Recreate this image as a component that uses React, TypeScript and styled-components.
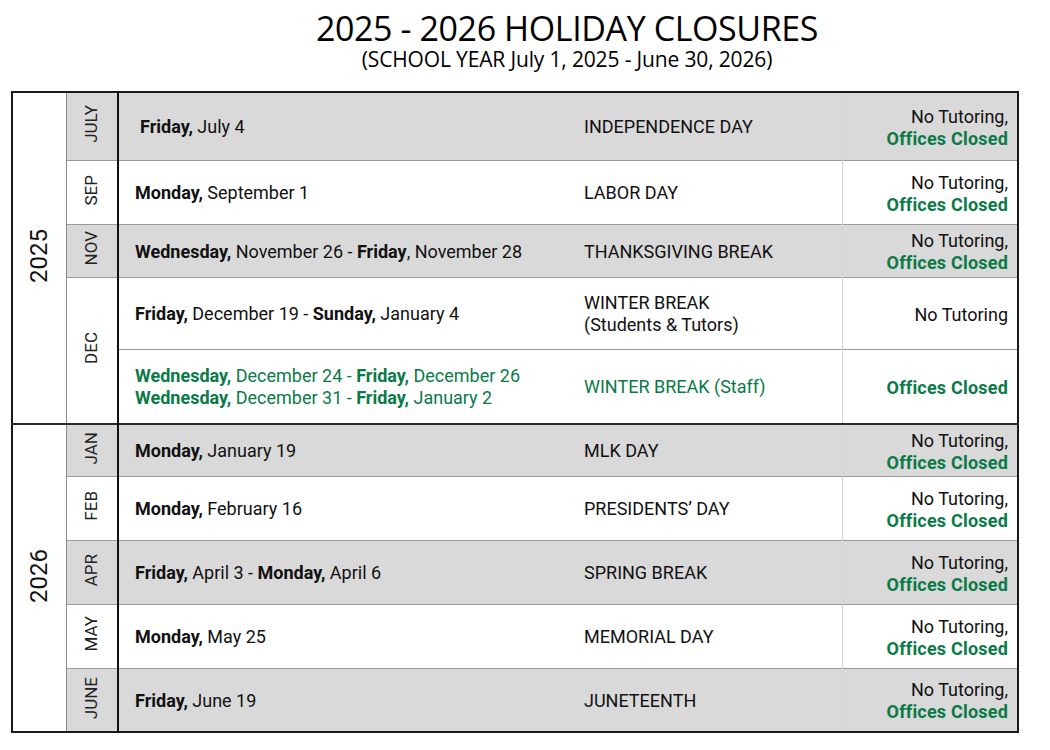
import React from "react";
import styled, { createGlobalStyle } from "styled-components";

const GREEN = "#0a7a48";
const GRAY = "#d9d9d9";

const Global = createGlobalStyle`
  html, body { margin: 0; padding: 0; background: #fff; }
  body { font-family: Roboto, "Liberation Sans", sans-serif; color: #111; }
`;

const Page = styled.div`
  width: 1050px;
  height: 750px;
  background: #fff;
  overflow: hidden;
`;

const Header = styled.header`
  padding: 10px 0 0 84px;
  text-align: center;
  font-family: "Open Sans", "Liberation Sans", sans-serif;
  color: #000;
`;

const Title = styled.h1`
  margin: 0;
  font-weight: 400;
  font-size: 34px;
  line-height: 37px;
  letter-spacing: -0.4px;
`;

const Subtitle = styled.div`
  margin: 0;
  font-size: 21px;
  line-height: 24px;
  letter-spacing: -0.15px;
`;

const Table = styled.table`
  margin: 20px 0 0 11px;
  width: 1006px;
  table-layout: fixed;
  border-collapse: collapse;
  border: 2px solid #1a1a1a;
  font-size: 18px;
`;

const Row = styled.tr<{ $gray?: boolean; $h: number; $yearTop?: boolean }>`
  height: ${(p) => p.$h}px;
  background: ${(p) => (p.$gray ? GRAY : "#fff")};
  & > td {
    border-top: ${(p) => (p.$yearTop ? "2px solid #2a2a2a" : "1px solid #9a9a9a")};
  }
`;

const YearCell = styled.td`
  background: #fff;
  border-right: 1px solid #8a8a8a;
  text-align: center;
  vertical-align: middle;
  padding: 0;
`;

const YearLabel = styled.span`
  display: inline-block;
  writing-mode: vertical-rl;
  transform: rotate(180deg);
  font-size: 24px;
  line-height: 24px;
  color: #111;
`;

const MonthCell = styled.td<{ $gray?: boolean }>`
  background: ${(p) => (p.$gray ? GRAY : "#fff")};
  border-right: 2px solid #111;
  text-align: center;
  vertical-align: middle;
  padding: 0;
`;

const MonthLabel = styled.span`
  display: inline-block;
  writing-mode: vertical-rl;
  transform: rotate(180deg);
  font-size: 17px;
  line-height: 17px;
  color: #222;
`;

const DateCell = styled.td<{ $green?: boolean; $indent?: number }>`
  padding: 2px 0 0 ${(p) => 16 + (p.$indent ?? 0)}px;
  line-height: 22px;
  color: ${(p) => (p.$green ? GREEN : "#111")};
  white-space: nowrap;
  b { font-weight: 700; }
`;

const HolidayCell = styled.td<{ $green?: boolean }>`
  padding: 2px 0 0 17px;
  line-height: 22px;
  color: ${(p) => (p.$green ? GREEN : "#111")};
  border-right: 1px solid #d4d4d4;
  white-space: nowrap;
`;

const StatusCell = styled.td`
  padding: 3px 9px 0 0;
  text-align: right;
  line-height: 22px;
  color: #111;
  white-space: nowrap;
`;

const Closed = styled.span`
  display: block;
  color: ${GREEN};
  font-weight: 700;
  letter-spacing: 0.2px;
`;

const Line = styled.span`
  display: block;
`;

type Status = "both" | "tutoring" | "closed";

const StatusContent = ({ s }: { s: Status }) => (
  <>
    {s !== "closed" && <Line>{s === "both" ? "No Tutoring," : "No Tutoring"}</Line>}
    {s !== "tutoring" && <Closed>Offices Closed</Closed>}
  </>
);

export default function App() {
  return (
    <Page>
      <Global />
      <Header>
        <Title>2025 - 2026 HOLIDAY CLOSURES</Title>
        <Subtitle>(SCHOOL YEAR July 1, 2025 - June 30, 2026)</Subtitle>
      </Header>
      <Table>
        <colgroup>
          <col style={{ width: 54 }} />
          <col style={{ width: 52 }} />
          <col style={{ width: 449 }} />
          <col style={{ width: 275 }} />
          <col style={{ width: 176 }} />
        </colgroup>
        <tbody>
          <Row $gray $h={68}>
            <YearCell rowSpan={5}>
              <YearLabel>2025</YearLabel>
            </YearCell>
            <MonthCell $gray>
              <MonthLabel>JULY</MonthLabel>
            </MonthCell>
            <DateCell $indent={5}>
              <b>Friday,</b> July 4
            </DateCell>
            <HolidayCell>INDEPENDENCE DAY</HolidayCell>
            <StatusCell>
              <StatusContent s="both" />
            </StatusCell>
          </Row>
          <Row $h={64}>
            <MonthCell>
              <MonthLabel>SEP</MonthLabel>
            </MonthCell>
            <DateCell>
              <b>Monday,</b> September 1
            </DateCell>
            <HolidayCell>LABOR DAY</HolidayCell>
            <StatusCell>
              <StatusContent s="both" />
            </StatusCell>
          </Row>
          <Row $gray $h={53}>
            <MonthCell $gray>
              <MonthLabel>NOV</MonthLabel>
            </MonthCell>
            <DateCell>
              <b>Wednesday,</b> November 26 - <b>Friday</b>, November 28
            </DateCell>
            <HolidayCell>THANKSGIVING BREAK</HolidayCell>
            <StatusCell>
              <StatusContent s="both" />
            </StatusCell>
          </Row>
          <Row $h={72}>
            <MonthCell rowSpan={2}>
              <MonthLabel>DEC</MonthLabel>
            </MonthCell>
            <DateCell>
              <b>Friday,</b> December 19 - <b>Sunday,</b> January 4
            </DateCell>
            <HolidayCell>
              <Line>WINTER BREAK</Line>
              <Line>(Students &amp; Tutors)</Line>
            </HolidayCell>
            <StatusCell>
              <StatusContent s="tutoring" />
            </StatusCell>
          </Row>
          <Row $h={75}>
            <DateCell $green>
              <Line>
                <b>Wednesday,</b> December 24 - <b>Friday,</b> December 26
              </Line>
              <Line>
                <b>Wednesday,</b> December 31 - <b>Friday,</b> January 2
              </Line>
            </DateCell>
            <HolidayCell $green>WINTER BREAK (Staff)</HolidayCell>
            <StatusCell>
              <StatusContent s="closed" />
            </StatusCell>
          </Row>
          <Row $gray $h={52} $yearTop>
            <YearCell rowSpan={5}>
              <YearLabel>2026</YearLabel>
            </YearCell>
            <MonthCell $gray>
              <MonthLabel>JAN</MonthLabel>
            </MonthCell>
            <DateCell>
              <b>Monday,</b> January 19
            </DateCell>
            <HolidayCell>MLK DAY</HolidayCell>
            <StatusCell>
              <StatusContent s="both" />
            </StatusCell>
          </Row>
          <Row $h={64}>
            <MonthCell>
              <MonthLabel>FEB</MonthLabel>
            </MonthCell>
            <DateCell>
              <b>Monday,</b> February 16
            </DateCell>
            <HolidayCell>PRESIDENTS’ DAY</HolidayCell>
            <StatusCell>
              <StatusContent s="both" />
            </StatusCell>
          </Row>
          <Row $gray $h={64}>
            <MonthCell $gray>
              <MonthLabel>APR</MonthLabel>
            </MonthCell>
            <DateCell>
              <b>Friday,</b> April 3 - <b>Monday,</b> April 6
            </DateCell>
            <HolidayCell>SPRING BREAK</HolidayCell>
            <StatusCell>
              <StatusContent s="both" />
            </StatusCell>
          </Row>
          <Row $h={64}>
            <MonthCell>
              <MonthLabel>MAY</MonthLabel>
            </MonthCell>
            <DateCell>
              <b>Monday,</b> May 25
            </DateCell>
            <HolidayCell>MEMORIAL DAY</HolidayCell>
            <StatusCell>
              <StatusContent s="both" />
            </StatusCell>
          </Row>
          <Row $gray $h={64}>
            <MonthCell $gray>
              <MonthLabel>JUNE</MonthLabel>
            </MonthCell>
            <DateCell>
              <b>Friday,</b> June 19
            </DateCell>
            <HolidayCell>JUNETEENTH</HolidayCell>
            <StatusCell>
              <StatusContent s="both" />
            </StatusCell>
          </Row>
        </tbody>
      </Table>
    </Page>
  );
}
